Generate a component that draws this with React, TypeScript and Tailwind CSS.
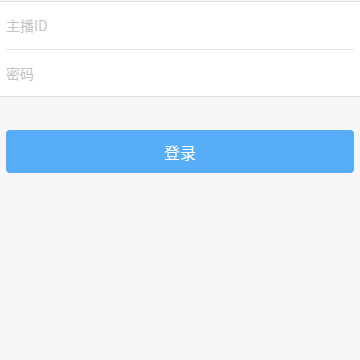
import React from "react";

export default function App() {
  return (
    <div
      className="w-[360px] h-[360px] bg-[#f7f7f7] pt-px overflow-hidden"
      style={{ fontFamily: '"Noto Sans CJK SC", "Noto Sans", sans-serif' }}
    >
      <div className="bg-white border-y border-[#e2e2e2]">
        <div className="h-[47px] flex items-center pl-[6px] text-[14px] text-[#c4c4c4]">
          主播ID
        </div>
        <div className="mx-[6px] h-px bg-[#e6e6e6]" />
        <div className="h-[46px] flex items-center pl-[6px] text-[14px] text-[#c4c4c4]">
          密码
        </div>
      </div>
      <div className="mt-[33px] mx-[6px] h-[43px] rounded-[4px] bg-[#57adf7] flex items-center justify-center text-white text-[16px]">
        登录
      </div>
    </div>
  );
}
